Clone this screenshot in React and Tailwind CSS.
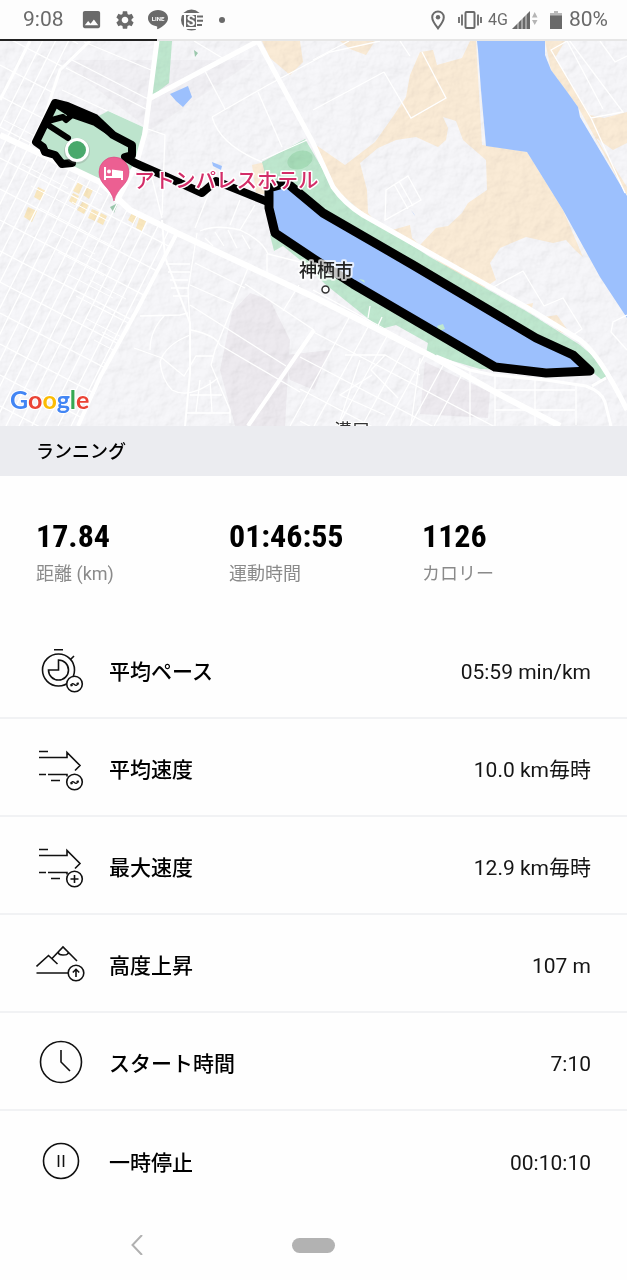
import { MdImage, MdSettings } from 'react-icons/md'

const stats = [
  { value: '17.84', label: '距離 (km)' },
  { value: '01:46:55', label: '運動時間' },
  { value: '1126', label: 'カロリー' },
]

const details = [
  { icon: PaceIcon, label: '平均ペース', value: '05:59 min/km' },
  { icon: AvgSpeedIcon, label: '平均速度', value: '10.0 km毎時' },
  { icon: MaxSpeedIcon, label: '最大速度', value: '12.9 km毎時' },
  { icon: ElevationIcon, label: '高度上昇', value: '107 m' },
  { icon: ClockIcon, label: 'スタート時間', value: '7:10' },
  { icon: PauseIcon, label: '一時停止', value: '00:10:10' },
]

// Parallel streets: a run of lines through (x + i * dx, y + i * dy)
function streets(count, x, y, dx, dy, lx, ly) {
  return Array.from({ length: count }, (_, i) => `M${x + i * dx} ${y + i * dy}l${lx} ${ly}`).join('')
}

/* ---------- Row icons ---------- */

function RowIcon({ children }) {
  return (
    <svg viewBox="0 0 50 50" className="w-[50px] h-[50px] shrink-0" fill="none" stroke="#111" strokeWidth="1.6" aria-hidden="true">
      {children}
    </svg>
  )
}

function AverageBadge() {
  return (
    <>
      <circle cx="38.5" cy="38" r="7.8" fill="#fff" />
      <path d="M35 39.5c.8-2.200 2-2.400 3.400-1s2.600 1.200 3.600-1.200M34.600 38.200l.6 1.400 1.500-.4M42.600 38.500l-.6-1.400-1.500.5" strokeWidth="1.4" />
    </>
  )
}

function SpeedLines() {
  return <path d="M3 7.500h9M3 13.500h28V8.500L44 21.500l-5 5M3 30.500h7M12 30.500h19v2M15 36.500h9" />
}

function PaceIcon() {
  return (
    <RowIcon>
      <circle cx="22.500" cy="24" r="16" />
      <path d="M18 3.700h9M34.500 13.500l3.500-3.500" />
      <path d="M22.500 14a10 10 0 1 1-10 10h10z" />
      <AverageBadge />
    </RowIcon>
  )
}

function AvgSpeedIcon() {
  return (
    <RowIcon>
      <SpeedLines />
      <AverageBadge />
    </RowIcon>
  )
}

function MaxSpeedIcon() {
  return (
    <RowIcon>
      <SpeedLines />
      <circle cx="38.500" cy="37" r="7.8" fill="#fff" />
      <path d="M38.500 33v8M34.500 37h8" />
    </RowIcon>
  )
}

function ElevationIcon() {
  return (
    <RowIcon>
      <path d="M.5 26.500l12-11 9 8.500M16 18.500L27 7l14 14M22.500 12.500c0 2 1.500 2.500 4.500 2.500s5 0 5.500-3M.5 33h32" />
      <circle cx="40" cy="33" r="7.800" fill="#fff" />
      <path d="M40 37v-7.500M36.800 32.500l3.200-3.200 3.200 3.200" />
    </RowIcon>
  )
}

function ClockIcon() {
  return (
    <RowIcon>
      <circle cx="25" cy="24" r="20.500" />
      <path d="M25 12v12l9 9" />
    </RowIcon>
  )
}

function PauseIcon() {
  return (
    <RowIcon>
      <circle cx="25" cy="24" r="17.500" />
      <path d="M22.500 18v12M27.500 18v12" />
    </RowIcon>
  )
}

/* ---------- Status bar ---------- */

function StatusBar() {
  return (
    <header className="bg-[#fdfdfd] text-[#6a6a6a]">
      <div className="flex items-center justify-between h-[39px] pl-[23px] pr-[19px] text-[21px]">
        <div className="flex items-center">
          <span className="w-[57px]">9:08</span>
          <MdImage className="w-[23px] h-[23px] mr-[11px]" />
          <MdSettings className="w-[22px] h-[22px] mr-[11px]" />
          <svg viewBox="0 0 22 22" className="w-[22px] h-[22px] mr-[11px]" aria-hidden="true">
            <path fill="currentColor" d="M11 1C5 1 1 4.700 1 9.200c0 4 3.500 7.200 8.500 8 .9.200.8.700.6 2.300 0 .6.300.8.900.5 4-2.100 10-6 10-10.800C21 4.700 17 1 11 1z" />
            <text x="11" y="11.500" fill="#fff" fontSize="6" fontWeight="700" textAnchor="middle">LINE</text>
          </svg>
          <svg viewBox="0 0 24 24" className="w-6 h-6 mr-[15px]" aria-hidden="true">
            <circle cx="11.500" cy="12" r="10.500" fill="currentColor" />
            <path fill="#fdfdfd" d="M0 5h24v2H0zM4 5h2v16H4zM4 19h14v2H4zM16 5h8v18h-8z" />
            <path stroke="currentColor" strokeWidth="2" d="M17 8.500h6M17 12.700h6M17 17h5" />
            <text x="11" y="18" fill="#fff" fontSize="14" fontWeight="700" textAnchor="middle">S</text>
          </svg>
          <span className="w-[6px] h-[6px] rounded-full bg-[#6a6a6a]" />
        </div>
        <div className="flex items-center">
          <svg viewBox="0 0 14 20" className="w-[14px] h-5 mr-[13px]" fill="none" stroke="currentColor" strokeWidth="2" aria-hidden="true">
            <path d="M7 18.300C4 14.500 1.200 11 1.200 7.200a5.800 5.800 0 0 1 11.600 0C12.800 11 10 14.500 7 18.300z" />
            <circle cx="7" cy="7.200" r="2.200" fill="currentColor" stroke="none" />
          </svg>
          <svg viewBox="0 0 24 18" className="w-6 h-[18px] mr-[6px]" fill="none" stroke="currentColor" strokeWidth="1.800" aria-hidden="true">
            <path d="M1 6v6M4 3.500v11M20 3.500v11M23 6v6" />
            <rect x="7.500" y="1" width="9" height="16" rx="1" strokeWidth="2" />
          </svg>
          <span className="text-base mr-1">4G</span>
          <svg viewBox="0 0 26 20" className="w-[26px] h-5 mr-3" aria-hidden="true">
            <path fill="currentColor" d="M0 19L18 1v18z" />
            <path stroke="#fdfdfd" strokeWidth=".8" d="M6 8v12M10 4v16M14 1v19" />
            <path fill="#b5b5b5" d="M20 7.500h5.500L22.700 2zM20 10h5.500l-2.800 5z" />
          </svg>
          <svg viewBox="0 0 12 20" className="w-3 h-5 mr-[7px]" aria-hidden="true">
            <path fill="#b9b9b9" d="M4 1h4v2h4v4H0V3h4z" />
            <path fill="currentColor" d="M0 5.500h12V19H0z" />
          </svg>
          <span>80%</span>
        </div>
      </div>
      <div className="h-[2px] bg-[#e6e6e6]">
        <div className="w-1/4 h-[2px] bg-[#222]" />
      </div>
    </header>
  )
}

/* ---------- Map ---------- */

function RouteMap() {
  return (
    <svg viewBox="0 41 627 385" className="block w-full" role="img" aria-label="ランニングのルート">
      <defs>
        <clipPath id="west">
          <path d="M0 41H80L60 70L36 142L100 182L130 210L177 233L78 426H0z" />
        </clipPath>
        <clipPath id="town">
          <path d="M433 360L560 426H250L314 330L340 312z" />
        </clipPath>
        <filter id="relief" x="0" y="0" width="100%" height="100%">
          <feTurbulence type="fractalNoise" baseFrequency=".07" numOctaves="4" seed="8" />
          <feDiffuseLighting surfaceScale="2.200" lightingColor="#fff">
            <feDistantLight azimuth="225" elevation="62" />
          </feDiffuseLighting>
          <feColorMatrix type="saturate" values="0" />
        </filter>
      </defs>

      <rect y="41" width="627" height="385" fill="#f7f7fa" />

      {/* Built-up areas */}
      <g fill="#eeebf0">
        <path d="M250 293L232 312L220 370L235 426H285L290 340L270 300z" />
        <path d="M285 355L330 350L314 390L290 380zM425 362L490 392L488 418L420 414z" />
        <path d="M420 60L60 60L150 130L255 60z" opacity=".5" />
      </g>

      {/* Sand */}
      <g fill="#fbecd7">
        <path d="M313 143L345 165L375 142L392 118L406 97L410 75L420 52L433 50L437 65L462 58L470 41H476L482 145L527 152L563 210L583 257L575 250L566 240L553 243L526 237L500 248L490 263L496 280L478 292L430 255L363 213L333 187z" />
        <path d="M262 41H300L303 62L290 75L270 58zM340 41H375L366 55L350 49z" />
        <path d="M545 41H565L555 58L590 115L604 118L627 112V143L613 150L596 138L627 187V195L578 107L551 70z" />
        <path d="M252 165L265 162L270 195L256 193zM523 305L533 303L531 314zM545 317L557 315L571 335L560 332z" />
      </g>
      <path fill="#f7f7fa" d="M360 163L378 148L396 140L416 137L438 147L446 140L448 128L443 117L456 121L463 140L486 160L487 190L468 203L462 213L448 226L436 228L420 245L412 238L410 225L385 232L368 213L367 190z" />

      {/* Parks */}
      <g fill="#bfe8cf">
        <path d="M157 41H172L169 83L152 96z" />
        <path d="M262 162L305 139L333 187L363 214L430 257L526 311L580 345L600 362L608 374L602 380L590 370L300 200L268 185z" />
        <path d="M270 235L274 251L283 246L305 264L325 284L376 325L381 329L396 325L428 343L426 353L436 356L480 369L510 370L400 290L290 235z" />
      </g>
      <ellipse cx="300" cy="160" rx="13" ry="9" fill="#a6dcb8" transform="rotate(-20 300 160)" />
      <path fill="#9cc9ae" d="M110 207L118 203L114 213zM194 50l4 3-3 4z" />

      {/* Shops */}
      <path fill="#fbe9c0" d="M38 187l8 4-5 10-7-4zM28 207l9 4-5 11-8-5zM78 182l5 3-4 9-6-3zM87 187l6 3-4 9-6-4zM73 193l6 3-4 9-6-4zM83 201l6 3-5 10-7-4zM92 209l7 3-4 9-7-3zM101 213l6 3-4 9-6-3zM133 211l6 3-5 10-6-4zM140 216l7 3-5 12-6-3z" />

      {/* Relief shading over the land */}
      <rect y="41" width="627" height="385" filter="url(#relief)" className="mix-blend-multiply opacity-25" />

      {/* Water */}
      <g fill="#9cc0fd">
        <path d="M477 41H545V55L551 70L568 93L578 107L580 117L627 196V318L600 277L563 210L527 152L486 146L481 90L478 50z" />
        <path d="M272 184L290 185L314 203L536 338L573 355L590 370L495 367L275 233z" />
        <path d="M170 94L188 86L192 97L183 107L176 101zM212 162L222 166L221 170L213 166zM411 210l3 4 1 2z" />
      </g>
      <path fill="#bfe8cf" d="M437 326l6-2 2 5-6 2zM359 279l5 1 1 3z" />

      {/* Side streets */}
      <g stroke="#fff" fill="none" strokeWidth="1.300">
        <g clipPath="url(#west)">
          <path d={streets(26, -150, 426, 13, 0, 200, -400)} />
          <path d={streets(17, 0, -90, 0, 31, 220, 115)} />
          <path strokeWidth="1" d={streets(14, 4, 120, 9, 22, 46, 24)} />
          <path strokeWidth="1" d={streets(11, 60, 150, 6, 26, 36, 19)} />
        </g>
        <g clipPath="url(#town)">
          <path d={streets(7, 290, 426, 24, 0, 60, -110)} />
          <path d={streets(4, 300, 325, 0, 32, 220, 115)} />
        </g>
        <path d="M84 42L120 57L151 70M72 60L146 98M66 68L146 109M62 90L144 128M145 128l20 7-3 80M205 71l20 38M194 41l30 18" />
        <path d="M212 117L268 85L330 52L380 41M212 117Q220 145 262 162M258 92l24 55M384 72L411 118L446 98L422 52M384 72L313 110M400 41l10 15M262 160l45-20" />
        <path d="M386 190l22-14 13 24-36 20zM394 184l14 25M399 181l14 25M313 60l36-19" />
        <path d="M551 50l18-10 54 72-32 6zM567 41l36 68M600 41l15 21 12-6M591 118l34 75" />
        <path d="M490 289L523 271L544 306L563 298L582 329L570 337M627 315L613 322L611 332L627 350" />
        <path d="M200 231Q215 224 240 230Q262 240 268 254L300 262M197 233L188 290L190 325M195 263L245 288M190 285L233 304M190 305L286 366M248 268L215 350L211 365L230 410V423M245 284L314 330M220 345L300 392M283 311l16-26M267 254v22M210 190L195 228M255 205l-15 25M150 170l12 48M240 200l-10 25" />
        <path d="M191 330Q215 335 220 345M190 335Q165 345 160 362Q162 380 172 390Q190 400 218 378M162 358l22 18 12-20h18M186 413H230M190 395h32M140 316L180 315L188 313M134 348L162 358M150 350Q150 330 165 315M200 380l-4 32M210 380l2 32" />
        <path d="M166 264h24M168 272h22M170 280h18M171 288h17M173 296h15M205 238l8 8M215 232l9 14M228 230l9 18M242 235l8 14" />
        <path d="M313 290L433 355M470 370v55M495 376v50M535 380v45M576 385v40M495 390h80M495 410h80M420 358l-9 67M345 355h40l35 20M385 355l-14 15 27 28M360 360l-20 60M372 375l-32 20 45 20M370 306l-2 12M382 317l-6 13" />
      </g>

      {/* Park at the start of the route */}
      <path fill="#bde4cd" d="M55 103L95 118L108 111L143 127L139 160L120 180L92 180L40 150L36 142z" />

      {/* Main roads */}
      <g stroke="#fff" fill="none" strokeLinejoin="round">
        <path strokeWidth="6" d="M0 135L60 163L100 182L130 210L177 233L314 297L433 357L495 392L560 426" />
        <path strokeWidth="5" d="M147 100L258 41L313 143L333 187Q345 204 363 215L430 253L526 307L580 340Q600 355 627 410" />
        <path strokeWidth="5" d="M157 41L145 133L136 165L116 203" />
        <path strokeWidth="4" d="M177 233L137 310L100 377L78 426M314 330L248 426" />
        <path strokeWidth="3" d="M436 356L470 370L493 375L546 380L586 386Q602 392 605 402L611 426M592 386L606 378M30 41L0 100M90 41L60 70L36 142" />
        <path strokeWidth="2" d="M162 220L165 257L190 323V373L185 426" />
      </g>

      {/* Recorded route */}
      <g stroke="#000" fill="none" strokeWidth="8" strokeLinejoin="round" strokeLinecap="round">
        <path d="M72 163L62 164L55 155L45 152L43 147L36 142L55 103L67 106L95 118L113 135L132 145V155L125 157L135 163L167 177L202 193L216 181L268 202" />
        <path d="M48 121L63 117L66 120L72 115L90 118M58 106L72 115L95 123L113 135M48 125L68 138" strokeWidth="6" />
        <path d="M269 188L287 183L323 213L413 265L536 338L573 355L590 371L546 373L495 367L353 284L314 259L275 233L269 208z" strokeWidth="9" />
      </g>

      <circle cx="77" cy="151" r="13" fill="#777" opacity=".25" />
      <circle cx="77" cy="150" r="10.500" fill="#4aa96c" stroke="#fff" strokeWidth="3" />

      {/* Hotel pin */}
      <path fill="#ec5f92" stroke="#d9457d" strokeWidth=".6" d="M114 201C111 187 99 185 99 172a15 15 0 0 1 30 0C129 185 117 187 114 201z" />
      <path fill="#fff" d="M104 167h2v9h17v4h-2v-2h-15v2h-2z" />
      <path fill="#fff" d="M112 169.500l11 1.500v5h-11z" />
      <circle cx="109" cy="171.500" r="2" fill="#fff" />

      {/* Place names */}
      <g strokeLinejoin="round" className="[paint-order:stroke] font-['Noto_Sans_CJK_JP',sans-serif]">
        <text x="134" y="188" fontSize="20.500" fontWeight="500" fill="#d32d68" stroke="#fff" strokeWidth="3">アトンパレスホテル</text>
        <text x="299" y="277" fontSize="18" fontWeight="500" fill="#222" stroke="#fff" strokeOpacity=".75" strokeWidth="4">神栖市</text>
        <text x="334" y="437" fontSize="18" fill="#333" stroke="#fff" strokeWidth="2">溝口</text>
      </g>
      <circle cx="325.500" cy="289.500" r="3.500" fill="#fff" stroke="#333" strokeWidth="1.500" />

      <text x="10" y="409" fontSize="25" fontWeight="700" stroke="#fff" strokeWidth="2" className="[paint-order:stroke] font-['Lato',sans-serif]">
        <tspan fill="#4285f4">G</tspan>
        <tspan fill="#ea4335">o</tspan>
        <tspan fill="#fbbc04">o</tspan>
        <tspan fill="#4285f4">g</tspan>
        <tspan fill="#34a853">l</tspan>
        <tspan fill="#ea4335">e</tspan>
      </text>
    </svg>
  )
}

export default function App() {
  return (
    <div className="bg-[#fefefe] text-black font-['Roboto','Noto_Sans_CJK_JP',sans-serif]">
      <StatusBar />
      <main>
        <RouteMap />

        <h1 className="flex items-center h-[50px] px-9 pt-px bg-[#ebecf0] text-lg font-medium">ランニング</h1>

        {/* Totals */}
        <dl className="grid grid-cols-3 pl-9 pr-3 pt-10 pb-[33px]">
          {stats.map(({ value, label }) => (
            <div key={label} className="flex flex-col-reverse">
              <dt className="text-lg leading-7 text-[#8a8a8a]">{label}</dt>
              <dd className="text-[32px] leading-10 pb-1 font-bold font-['Liberation_Sans_Narrow','Roboto_Condensed','Roboto',sans-serif]">
                {value}
              </dd>
            </div>
          ))}
        </dl>

        {/* Details */}
        <dl className="divide-y-2 divide-[#f1f2f4]">
          {details.map(({ icon: Icon, label, value }) => (
            <div key={label} className="flex items-center h-[98px] px-9 pt-1 text-[21px]">
              <Icon />
              <dt className="flex-1 pl-[23px] pt-1 font-medium">{label}</dt>
              <dd className="pt-1 text-[#151515]">{value}</dd>
            </div>
          ))}
        </dl>
      </main>

      {/* System navigation */}
      <nav className="grid grid-cols-3 items-center justify-items-center h-[72px] px-12">
        <button aria-label="戻る" className="p-2">
          <svg viewBox="0 0 12 20" className="w-3 h-5" fill="none" stroke="#b0b0b0" strokeWidth="2">
            <path d="M11 0L1.500 10L11 20" />
          </svg>
        </button>
        <button aria-label="ホーム" className="w-[43px] h-[15px] rounded-full bg-[#b2b2b2]" />
      </nav>
      <div className="flex justify-center items-end h-[3px]">
        <span className="w-[43px] h-px bg-[#cfcfcf]" />
      </div>
    </div>
  )
}
